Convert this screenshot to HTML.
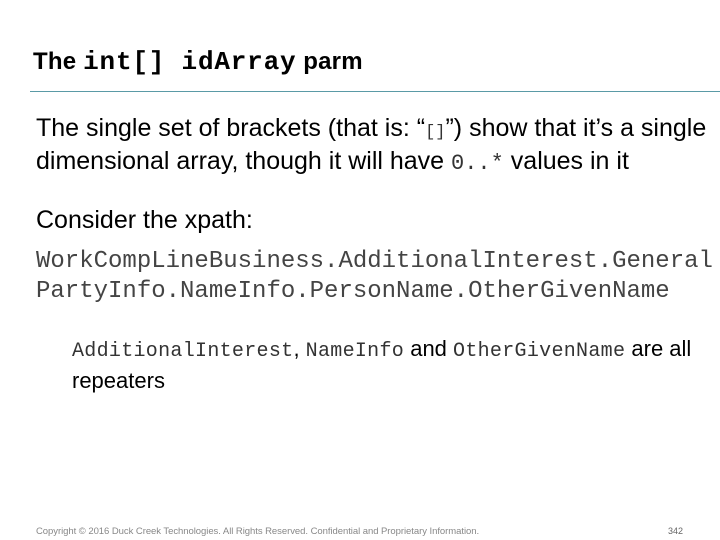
<!DOCTYPE html>
<html><head><meta charset="utf-8"><style>
body{margin:0;width:720px;height:540px;background:#fff;position:relative;overflow:hidden;font-family:"Liberation Sans",sans-serif;color:#000}
.a{position:absolute;white-space:nowrap}
.m{font-family:"Liberation Mono",monospace;color:#333}
</style></head><body>
<div class="a" style="left:33px;top:47px;font-size:24px;font-weight:bold;letter-spacing:0.2px">The <span class="m" style="color:#000;font-size:26px;letter-spacing:0.8px">int[] idArray</span> parm</div>
<div class="a" style="left:30px;top:91px;width:690px;height:1px;background:#5a9aa6"></div>
<div class="a" style="left:36px;top:114px;font-size:25px;line-height:28px;letter-spacing:0">The single set of brackets (that is: “<span class="m" style="font-size:17px;letter-spacing:0">[]</span>”) show that it’s a single<br>dimensional array, though it will have <span class="m" style="font-size:22px;letter-spacing:0">0..*</span> values in it</div>
<div class="a" style="left:36px;top:206px;font-size:25px;letter-spacing:0">Consider the xpath:</div>
<div class="a m" style="left:36px;top:247px;font-size:24px;line-height:30px;color:#444">WorkCompLineBusiness.AdditionalInterest.General<br>PartyInfo.NameInfo.PersonName.OtherGivenName</div>
<div class="a" style="left:72px;top:334px;font-size:22px;line-height:29px;letter-spacing:0"><span class="m" style="font-size:20px;letter-spacing:0.3px">AdditionalInterest</span>, <span class="m" style="font-size:20px;letter-spacing:0.3px">NameInfo</span> and <span class="m" style="font-size:20px;letter-spacing:0.3px">OtherGivenName</span> are all<br>repeaters</div>
<div class="a" style="left:36px;top:526px;font-size:9.5px;letter-spacing:-0.05px;color:#888">Copyright © 2016 Duck Creek Technologies. All Rights Reserved. Confidential and Proprietary Information.</div>
<div class="a" style="left:668px;top:526px;font-size:9px;color:#666">342</div>
</body></html>
